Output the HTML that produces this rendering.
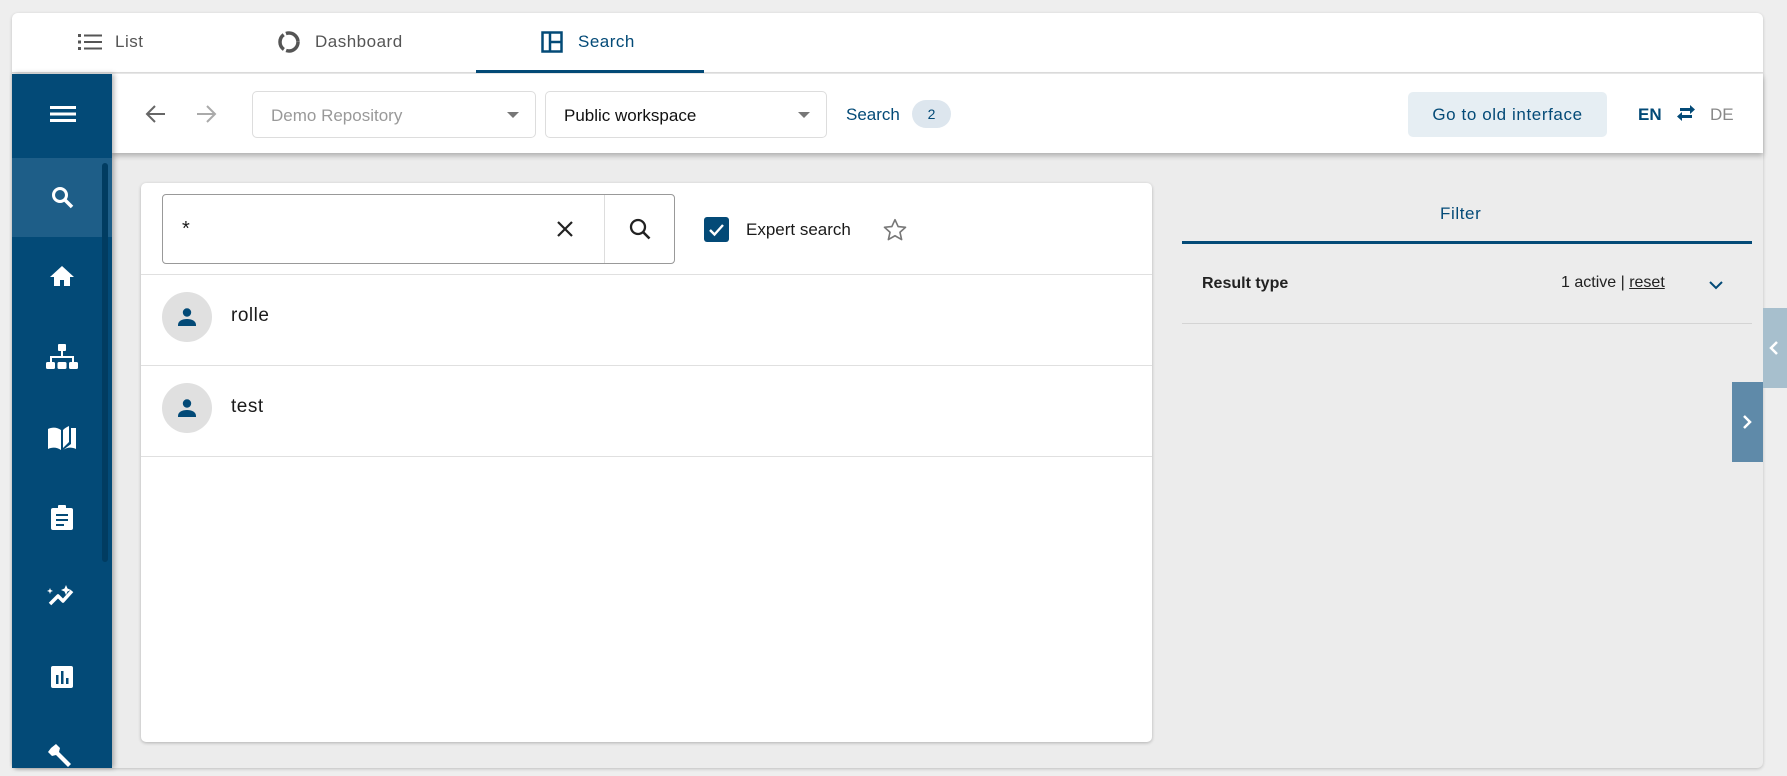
<!DOCTYPE html>
<html><head><meta charset="utf-8"><style>
*{box-sizing:border-box;margin:0;padding:0}
body{width:1787px;height:776px;background:#eeeeee;font-family:"Liberation Sans",sans-serif;position:relative;overflow:hidden;color:#1a1a1a}
.a{position:absolute}
.card{left:12px;top:13px;width:1751px;height:755px;background:#ececec;border-radius:6px;box-shadow:0 1px 3px rgba(0,0,0,.2);overflow:hidden}
.tabs{left:12px;top:13px;width:1751px;height:60px;background:#fff;border-bottom:1px solid #ddd;border-radius:6px 6px 0 0}
.tab{font-size:17px;letter-spacing:.5px;top:30px;color:#555}
.side{left:12px;top:74px;width:100px;height:694px;background:#034a77;box-shadow:2px 0 5px rgba(0,0,0,.3)}
.tool{left:112px;top:74px;width:1651px;height:79px;background:#fff;box-shadow:0 3px 5px rgba(0,0,0,.25)}
.dd{height:47px;top:91px;border:1px solid #ddd;border-radius:5px;background:#fff;font-size:17px;padding:14px 18px}
.caret{position:absolute;right:16px;top:20px;border-left:6px solid transparent;border-right:6px solid transparent;border-top:6px solid #777}
svg{display:block}
</style></head><body>
<div class="a card"></div>
<div class="a tabs"></div>
<svg class="a" style="left:78px;top:33px" width="24" height="18" viewBox="0 0 24 18"><g fill="#555"><rect x="0" y="1" width="3" height="3"/><rect x="0" y="7.5" width="3" height="3"/><rect x="0" y="14" width="3" height="3"/><rect x="6" y="1.5" width="18" height="2"/><rect x="6" y="8" width="18" height="2"/><rect x="6" y="14.5" width="18" height="2"/></g></svg>
<div class="a tab" style="left:115px;top:32px">List</div>
<svg class="a" style="left:277px;top:30px" width="24" height="24" viewBox="0 0 24 24"><circle cx="12" cy="12" r="9" fill="none" stroke="#555" stroke-width="3.5" stroke-dasharray="17 2.5 17 2.5 17 2.5"/></svg>
<div class="a tab" style="left:315px;top:32px">Dashboard</div>
<svg class="a" style="left:541px;top:31px" width="22" height="22" viewBox="0 0 22 22"><g fill="none" stroke="#034a77" stroke-width="2.5"><rect x="1.5" y="1.5" width="19" height="19"/><path d="M9 1.5v19M9 11h11.5"/></g></svg>
<div class="a tab" style="left:578px;top:32px;color:#034a77">Search</div>
<div class="a" style="left:476px;top:70px;width:228px;height:3px;background:#034a77"></div>

<div class="a tool"></div>
<div class="a side">
 <div class="a" style="left:0;top:84px;width:100px;height:79px;background:#1e5e88"></div>
 <div class="a" style="left:90px;top:89px;width:6px;height:399px;border-radius:3px;background:#013c61"></div>
</div>
<svg class="a" style="left:50px;top:105px" width="26" height="18" viewBox="0 0 26 18"><g fill="#fff"><rect y="1" width="26" height="3"/><rect y="7.5" width="26" height="3"/><rect y="14" width="26" height="3"/></g></svg>
<svg class="a" style="left:50px;top:185px" width="24" height="24" viewBox="0 0 24 24"><circle cx="10" cy="10" r="6.5" fill="none" stroke="#fff" stroke-width="3"/><path d="M15 15l7 7" stroke="#fff" stroke-width="3.5"/></svg>
<svg class="a" style="left:49px;top:265px" width="26" height="22" viewBox="0 0 26 22"><path d="M13 1L1 12h4v9h6v-6h4v6h6v-9h4z" fill="#fff"/></svg>
<svg class="a" style="left:46px;top:344px" width="32" height="28" viewBox="0 0 32 28"><g fill="#fff"><rect x="12" y="0" width="8" height="7" rx="1"/><rect x="15" y="7" width="2" height="7"/><rect x="4" y="12" width="24" height="2"/><rect x="4" y="12" width="2" height="6"/><rect x="26" y="12" width="2" height="6"/><rect x="0" y="18" width="9" height="7" rx="1.5"/><rect x="11.5" y="18" width="9" height="7" rx="1.5"/><rect x="23" y="18" width="9" height="7" rx="1.5"/></g></svg>
<svg class="a" style="left:47px;top:425px" width="30" height="26" viewBox="0 0 30 26"><path d="M1 4c4-2 9-2 13 1v20c-4-3-9-3-13-1z" fill="#fff"/><path d="M16 5c2-2 4-3 6-4v16l-6 6zM24 3h5v21c-4-2-9-2-13 1l8-6z" fill="#fff"/></svg>
<svg class="a" style="left:50px;top:505px" width="24" height="26" viewBox="0 0 24 26"><rect x="1" y="3" width="22" height="22" rx="2" fill="#fff"/><rect x="8" y="0" width="8" height="5" rx="1" fill="#fff"/><g fill="#034a77"><rect x="6" y="9" width="12" height="2"/><rect x="6" y="14" width="12" height="2"/><rect x="6" y="19" width="8" height="2"/></g></svg>
<svg class="a" style="left:47px;top:585px" width="30" height="22" viewBox="0 0 30 22"><path d="M3 19l8-8 5 5 9-10" fill="none" stroke="#fff" stroke-width="3.5" stroke-linejoin="round"/><path d="M19 0l1.5 3.5L24 5l-3.5 1.5L19 10l-1.5-3.5L14 5l3.5-1.5zM3 3l.8 2L6 6l-2.2.8L3 9l-.8-2.2L0 6l2.2-1z" fill="#fff"/></svg>
<svg class="a" style="left:51px;top:666px" width="22" height="22" viewBox="0 0 22 22"><rect width="22" height="22" rx="2" fill="#fff"/><g fill="#034a77"><rect x="5" y="9" width="2.5" height="9"/><rect x="10" y="5" width="2.5" height="13"/><rect x="15" y="12" width="2.5" height="6"/></g></svg>
<svg class="a" style="left:48px;top:743px" width="26" height="25" viewBox="0 0 26 25"><path d="M3 5l5-4 4 4-1 4 12 12-3 3L8 12 4 13 0 9z" fill="#fff"/></svg>

<svg class="a" style="left:145px;top:103px" width="22" height="22" viewBox="0 0 22 22"><path d="M20 11H3M10 3l-8 8 8 8" fill="none" stroke="#666" stroke-width="2"/></svg>
<svg class="a" style="left:195px;top:103px" width="22" height="22" viewBox="0 0 22 22"><path d="M2 11h17M12 3l8 8-8 8" fill="none" stroke="#aaa" stroke-width="2"/></svg>
<div class="a dd" style="left:252px;width:284px;color:#999">Demo Repository<span class="caret"></span></div>
<div class="a dd" style="left:545px;width:282px;color:#111">Public workspace<span class="caret"></span></div>
<div class="a" style="left:846px;top:105px;font-size:17px;color:#034a77">Search</div>
<div class="a" style="left:912px;top:100px;width:39px;height:28px;border-radius:14px;background:#dde6ee;font-size:14px;text-align:center;line-height:28px;color:#034a77">2</div>
<div class="a" style="left:1408px;top:92px;width:199px;height:45px;border-radius:5px;background:#e6eef3;font-size:17px;letter-spacing:.6px;color:#034a77;text-align:center;line-height:45px">Go to old interface</div>
<div class="a" style="left:1638px;top:105px;font-size:17px;font-weight:bold;color:#034a77">EN</div>
<svg class="a" style="left:1676px;top:104px" width="20" height="18" viewBox="0 0 20 18"><g fill="#034a77"><path d="M4 4h10V1l5 4.5-5 4.5V7H4z"/><path d="M16 11H6V8l-5 4.5L6 17v-3h10z"/></g></svg>
<div class="a" style="left:1710px;top:105px;font-size:17px;color:#888">DE</div>

<div class="a" style="left:141px;top:183px;width:1011px;height:559px;background:#fff;border-radius:5px;box-shadow:0 1px 3px rgba(0,0,0,.25)"></div>
<div class="a" style="left:162px;top:194px;width:513px;height:70px;border:1px solid #999;border-radius:4px"></div>
<div class="a" style="left:604px;top:195px;width:1px;height:68px;background:#ddd"></div>
<div class="a" style="left:182px;top:218px;font-size:20px">*</div>
<svg class="a" style="left:555px;top:219px" width="20" height="20" viewBox="0 0 20 20"><path d="M3 3l14 14M17 3L3 17" stroke="#222" stroke-width="2.2"/></svg>
<svg class="a" style="left:628px;top:217px" width="24" height="24" viewBox="0 0 24 24"><circle cx="10" cy="10" r="7" fill="none" stroke="#222" stroke-width="2.3"/><path d="M15 15l6.5 6.5" stroke="#222" stroke-width="2.6"/></svg>
<div class="a" style="left:704px;top:217px;width:25px;height:25px;border-radius:3px;background:#034a77"></div>
<svg class="a" style="left:706px;top:219px" width="21" height="21" viewBox="0 0 21 21"><path d="M4 11l4.5 4.5L17 6" fill="none" stroke="#fff" stroke-width="2.4"/></svg>
<div class="a" style="left:746px;top:220px;font-size:17px">Expert search</div>
<svg class="a" style="left:882px;top:217px" width="26" height="26" viewBox="0 0 24 24"><path d="M12 2.5l2.9 6.3 6.8.7-5.1 4.6 1.5 6.7L12 17.3l-6.1 3.5 1.5-6.7L2.3 9.5l6.8-.7z" fill="none" stroke="#777" stroke-width="1.5" stroke-linejoin="round"/></svg>
<div class="a" style="left:141px;top:274px;width:1011px;height:1px;background:#e0e0e0"></div>
<div class="a" style="left:141px;top:365px;width:1011px;height:1px;background:#e0e0e0"></div>
<div class="a" style="left:141px;top:456px;width:1011px;height:1px;background:#e0e0e0"></div>
<div class="a" style="left:162px;top:292px;width:50px;height:50px;border-radius:50%;background:#e0e0e0"></div>
<svg class="a" style="left:175px;top:305px" width="24" height="24" viewBox="0 0 24 24"><circle cx="12" cy="7.5" r="4.2" fill="#034a77"/><path d="M3 20c0-4 4-6 9-6s9 2 9 6v1H3z" fill="#034a77"/></svg>
<div class="a" style="left:231px;top:305px;font-size:19px;letter-spacing:.5px">rolle</div>
<div class="a" style="left:162px;top:383px;width:50px;height:50px;border-radius:50%;background:#e0e0e0"></div>
<svg class="a" style="left:175px;top:396px" width="24" height="24" viewBox="0 0 24 24"><circle cx="12" cy="7.5" r="4.2" fill="#034a77"/><path d="M3 20c0-4 4-6 9-6s9 2 9 6v1H3z" fill="#034a77"/></svg>
<div class="a" style="left:231px;top:396px;font-size:19px;letter-spacing:.5px">test</div>

<div class="a" style="left:1440px;top:204px;font-size:17px;letter-spacing:.6px;color:#034a77">Filter</div>
<div class="a" style="left:1182px;top:241px;width:570px;height:3px;background:#034a77"></div>
<div class="a" style="left:1202px;top:275px;font-size:16px;font-weight:bold;color:#222">Result type</div>
<div class="a" style="left:1561px;top:274px;font-size:16px;color:#222">1 active | <span style="text-decoration:underline">reset</span></div>
<svg class="a" style="left:1708px;top:279px" width="16" height="12" viewBox="0 0 16 12"><path d="M2 3l6 6 6-6" fill="none" stroke="#034a77" stroke-width="2"/></svg>
<div class="a" style="left:1182px;top:323px;width:570px;height:1px;background:#d4d4d4"></div>

<div class="a" style="left:1763px;top:308px;width:24px;height:80px;background:#a7bfcd"></div>
<svg class="a" style="left:1768px;top:340px" width="12" height="16" viewBox="0 0 12 16"><path d="M9 2L3 8l6 6" fill="none" stroke="#fff" stroke-width="2.5"/></svg>
<div class="a" style="left:1732px;top:382px;width:31px;height:80px;background:#5f8aa9"></div>
<svg class="a" style="left:1741px;top:414px" width="12" height="16" viewBox="0 0 12 16"><path d="M3 2l6 6-6 6" fill="none" stroke="#fff" stroke-width="2.5"/></svg>
</body></html>
